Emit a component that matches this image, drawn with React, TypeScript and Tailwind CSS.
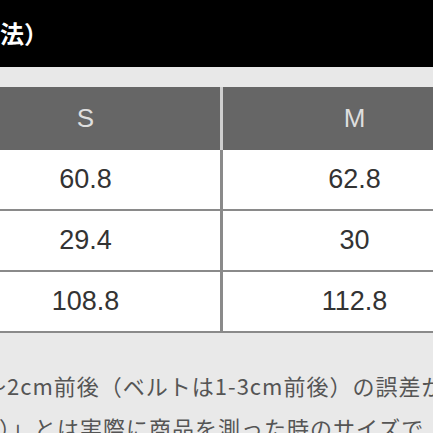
import React from "react";

const rows = [
  ["60.8", "62.8"],
  ["29.4", "30"],
  ["108.8", "112.8"],
];

const App: React.FC = () => {
  return (
    <div className="w-[433px] h-[433px] overflow-hidden bg-[#e9e9e9] font-['Noto_Sans_CJK_JP',sans-serif]">
      {/* title bar */}
      <div className="h-[67px] bg-black flex items-center pb-[2px]">
        <span className="whitespace-nowrap text-[24px] font-bold text-white leading-none">法）</span>
      </div>
      <div className="h-[20px] bg-[#e8e8e8]" />

      {/* size table */}
      <div className="-ml-[49px] w-[535px] font-['Liberation_Sans',sans-serif]">
        <div className="flex h-[63px] bg-[#666666] text-[26px] text-[#dedede]">
          <div className="w-[269px] flex items-center justify-center">S</div>
          <div className="flex-1 flex items-center justify-center border-l-[3px] border-[#cfcfcf]">M</div>
        </div>
        {rows.map((r, i) => (
          <div key={i} className="flex h-[61px] bg-white border-b-2 border-[#8a8a8a] text-[27px] text-[#333]">
            <div className="w-[269px] flex items-center justify-center">{r[0]}</div>
            <div className="flex-1 flex items-center justify-center border-l-[3px] border-[#8a8a8a]">{r[1]}</div>
          </div>
        ))}
      </div>

      {/* notes */}
      <div className="pt-[31px] text-[22px] leading-[42px] tracking-[1px] text-[#555] whitespace-nowrap">
        <div className="-ml-[16px]">～2cm前後（ベルトは1-3cm前後）の誤差が</div>
        <div className="-ml-[1px]">）」とは実際に商品を測った時のサイズで</div>
      </div>
    </div>
  );
};

export default App;
